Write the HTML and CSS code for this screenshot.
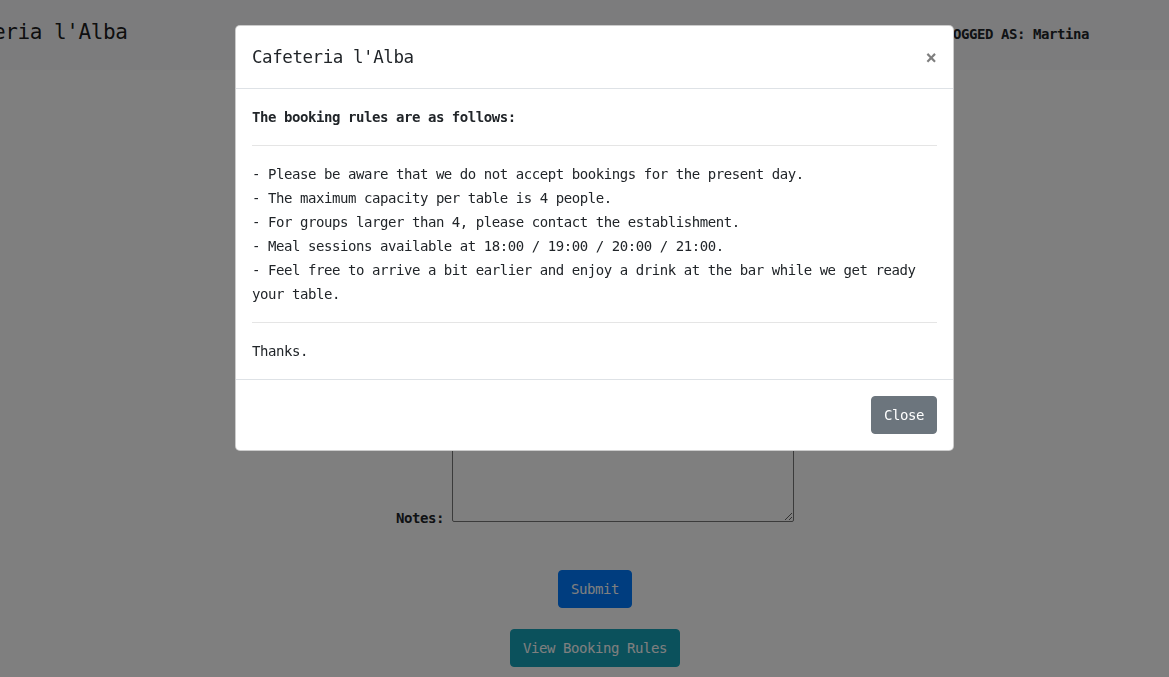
FILE: index.html
```html
<!DOCTYPE html>
<html lang="en">
<head>
<meta charset="utf-8">
<title>Cafeteria l'Alba</title>
<link rel="stylesheet" href="styles.css">
</head>
<body>
<div class="page">
  <nav class="navbar">
    <span class="brand">Cafeteria l'Alba</span>
    <span class="user">LOGGED AS: Martina</span>
  </nav>
  <main class="booking">
    <form class="form">
      <div class="row notes-row"><label class="label" for="notes">Notes:</label><textarea id="notes" class="notes"></textarea></div>
      <button type="button" class="btn btn-primary submit">Submit</button>
    </form>
    <button type="button" class="btn btn-info rules">View Booking Rules</button>
  </main>
</div>

<div class="backdrop"></div>
<div class="modal">
  <div class="modal-content">
    <div class="modal-header">
      <h5 class="modal-title">Cafeteria l'Alba</h5>
      <button type="button" class="close">×</button>
    </div>
    <div class="modal-body">
      <p><strong>The booking rules are as follows:</strong></p>
      <hr>
      <p>- Please be aware that we do not accept bookings for the present day.<br>- The maximum capacity per table is 4 people.<br>- For groups larger than 4, please contact the establishment.<br>- Meal sessions available at 18:00 / 19:00 / 20:00 / 21:00.<br>- Feel free to arrive a bit earlier and enjoy a drink at the bar while we get ready your table.</p>
      <hr>
      <p>Thanks.</p>
    </div>
    <div class="modal-footer">
      <button type="button" class="btn btn-secondary">Close</button>
    </div>
  </div>
</div>
</body>
</html>
```

FILE: styles.css
```css
html, body {
  margin: 0;
  padding: 0;
  overflow: hidden;
  height: 100%;
}
body {
  font-family: "DejaVu Sans Mono", monospace;
  font-size: 14px;
  line-height: 24px;
  letter-spacing: -0.031em;
  color: #212529;
  background: #fff;
}
.page {
  min-height: 100%;
}
.navbar {
  display: flex;
  justify-content: space-between;
  align-items: center;
  height: 70px;
  box-sizing: border-box;
  padding: 0 80px 6px 0;
  background: #f8f9fa;
}
.brand {
  margin-left: -68px;
  font-size: 21px;
  line-height: 36px;
  color: rgba(0, 0, 0, 0.9);
}
.user {
  font-weight: bold;
  margin-top: 4px;
}
.booking {
  display: flex;
  flex-direction: column;
  align-items: center;
  padding: 352px 0 0 21px;
}
.form {
  display: flex;
  flex-direction: column;
  align-items: center;
  margin: 0;
}
.row {
  display: flex;
  gap: 8px;
}
.label {
  font-weight: bold;
}
.notes-row {
  align-items: flex-end;
}
.notes-row .label {
  margin-bottom: -8px;
}
.notes {
  width: 342px;
  height: 100px;
  box-sizing: border-box;
  border: 1px solid #767676;
  border-radius: 2px;
  background: #fff;
  font: inherit;
  margin: 0;
}
.btn {
  font-family: inherit;
  font-size: 14px;
  letter-spacing: -0.031em;
  line-height: 24px;
  padding: 6px 12px;
  border: 1px solid transparent;
  border-radius: 4px;
  color: #fff;
  cursor: pointer;
}
.btn-primary {
  background: #007bff;
  border-color: #007bff;
}
.btn-info {
  background: #17a2b8;
  border-color: #17a2b8;
}
.btn-secondary {
  background: #6c757d;
  border-color: #6c757d;
}
.submit {
  margin-top: 48px;
}
.rules {
  margin-top: 21px;
}
.backdrop {
  position: fixed;
  inset: 0;
  background: rgba(0, 0, 0, 0.5);
}
.modal {
  position: fixed;
  inset: 0;
  display: flex;
  justify-content: center;
  align-items: flex-start;
  padding-left: 20px;
}
.modal-content {
  width: 719px;
  box-sizing: border-box;
  margin-top: 25px;
  background: #fff;
  border: 1px solid rgba(0, 0, 0, 0.2);
  border-radius: 5px;
}
.modal-header {
  display: flex;
  justify-content: space-between;
  align-items: flex-start;
  padding: 16px;
  border-bottom: 1px solid #dee2e6;
}
.modal-title {
  margin: 0;
  font-size: 17.5px;
  line-height: 30px;
  font-weight: 500;
}
.close {
  padding: 16px;
  margin: -16px -16px -16px auto;
  background: transparent;
  border: 0;
  font-family: inherit;
  font-size: 19px;
  line-height: 30px;
  font-weight: bold;
  color: #000;
  opacity: 0.5;
  text-shadow: 0 1px 0 #fff;
  cursor: pointer;
}
.modal-body {
  padding: 16px;
}
.modal-body p {
  margin: 0;
}
.modal-body hr {
  margin: 16px 0;
  border: 0;
  border-top: 1px solid rgba(0, 0, 0, 0.1);
}
.modal-footer {
  display: flex;
  justify-content: flex-end;
  padding: 16px;
  border-top: 1px solid #dee2e6;
}
```
